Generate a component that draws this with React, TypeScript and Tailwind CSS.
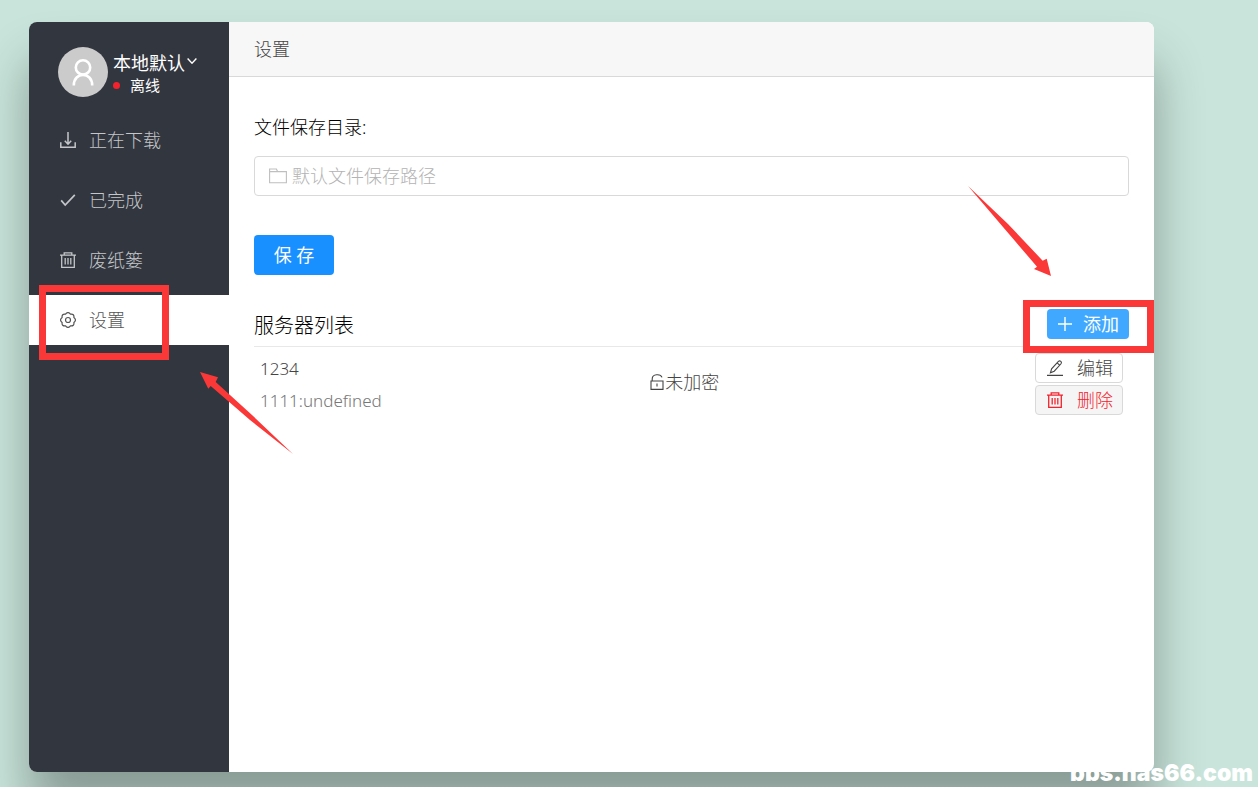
import React from 'react';
import clsx from 'clsx';

type IconProps = { className?: string };

const DownloadIcon: React.FC<IconProps> = ({ className }) => (
  <svg viewBox="0 0 16 16" className={className} fill="none" stroke="currentColor" strokeWidth="1.5">
    <path d="M.8 10.2v5h14.4v-5M8 0v12M4.8 8.8L8 12.2l3.2-3.4" />
  </svg>
);

const CheckIcon: React.FC<IconProps> = ({ className }) => (
  <svg viewBox="0 0 16 16" className={className} fill="none" stroke="currentColor" strokeWidth="1.7">
    <path d="M1.2 8.4l4 4.6L14.8 2.8" />
  </svg>
);

const TrashIcon: React.FC<IconProps> = ({ className }) => (
  <svg viewBox="0 0 16 16" className={className} fill="none" stroke="currentColor" strokeWidth="1.3">
    <path d="M0 3.2h16M4.2 3V.9h7.6V3M1.7 3.2v12.1h12.6V3.2M5.2 6v6.6M8 6v6.6M10.8 6v6.6" />
  </svg>
);

const GearIcon: React.FC<IconProps> = ({ className }) => (
  <svg viewBox="0 0 16 16" className={className} fill="none" stroke="currentColor" strokeWidth="1.2">
    <path d="M13.9 5.55Q17 8 13.9 10.45Q14.4 14.4 10.45 13.9Q8 17 5.55 13.9Q1.6 14.4 2.1 10.45Q-1 8 2.1 5.55Q1.6 1.6 5.55 2.1Q8 -1 10.45 2.1Q14.4 1.6 13.9 5.55Z" />
    <circle cx="8" cy="8" r="2.5" />
  </svg>
);

const FolderIcon: React.FC<IconProps> = ({ className }) => (
  <svg viewBox="0 0 18 16" className={className} fill="none" stroke="currentColor" strokeWidth="1.1">
    <path d="M.6 14.8V1h6.8l1.2 2.6h8.8v11.2zM.6 3.6h8" />
  </svg>
);

const LockIcon: React.FC<IconProps> = ({ className }) => (
  <svg viewBox="0 0 14 16" className={className} fill="none" stroke="currentColor" strokeWidth="1.1">
    <path d="M1 7h12v8.4H1zM2.2 7V5c0-5.2 8.4-5.4 9.8-1.6M7 9.4v3" />
  </svg>
);

const PencilIcon: React.FC<IconProps> = ({ className }) => (
  <svg viewBox="0 0 16 16" className={className} fill="none" stroke="currentColor" strokeWidth="1.1">
    <path d="M0 15.4h16M3.4 12.8l1.2-4L11.4 1.4q1.2-1 2.4 0t0 2.6L7.2 11.2zM10.2 2.8l2.4 2.4" />
  </svg>
);

const PlusIcon: React.FC<IconProps> = ({ className }) => (
  <svg viewBox="0 0 16 16" className={className} fill="none" stroke="currentColor" strokeWidth="1.4">
    <path d="M1 8h14M8 1v14" />
  </svg>
);

const menus = [
  { key: 'downloading', label: '正在下载', Icon: DownloadIcon },
  { key: 'done', label: '已完成', Icon: CheckIcon },
  { key: 'trash', label: '废纸篓', Icon: TrashIcon },
  { key: 'setting', label: '设置', Icon: GearIcon },
];

const servers = [{ name: '1234', address: '1111:undefined', secure: '未加密' }];

const Sidebar: React.FC<{ active: string }> = ({ active }) => (
  <aside className="w-[200px] shrink-0 rounded-l-lg bg-[#32363f] pt-[25px]">
    <div className="flex gap-[5px] pl-[29px]">
      <span className="flex h-[50px] w-[50px] items-center justify-center rounded-full bg-[#cbcbcb] text-white">
        <svg viewBox="0 0 28 28" className="h-7 w-7" fill="none" stroke="currentColor" strokeWidth="2.6">
          <circle cx="14" cy="9.4" r="7.2" />
          <path d="M4.8 27.4c0-14 18.4-14 18.4 0" />
        </svg>
      </span>
      <div className="font-normal text-white">
        <button className="flex h-[28px] items-center gap-[2px] pt-1 text-[18px]">
          本地默认
          <svg viewBox="0 0 10 6" className="mb-1 h-[6px] w-[10px]" fill="none" stroke="currentColor" strokeWidth="1.4">
            <path d="M.6.6L5 5.2 9.4.6" />
          </svg>
        </button>
        <p className="flex h-[20px] items-center gap-[10px] text-[15px]">
          <span className="h-[7px] w-[7px] rounded-full bg-[#f5222d]" />
          离线
        </p>
      </div>
    </div>
    <nav className="mt-[18px] flex flex-col gap-[10px]">
      {menus.map(({ key, label, Icon }) => (
        <a
          key={key}
          href={`#${key}`}
          className={clsx(
            'flex h-[50px] items-center gap-[13px] pl-[31px] text-[18px]',
            key === active ? 'bg-white text-[#555]' : 'text-[#c4c6c9]'
          )}
        >
          <Icon className="h-4 w-4" />
          {label}
        </a>
      ))}
    </nav>
  </aside>
);

const App: React.FC = () => (
  <div className="relative flex h-screen overflow-hidden bg-[#c9e5db] pt-[22px] pr-[104px] pb-[15px] pl-[29px] font-['Noto_Sans','Noto_Sans_CJK_SC',sans-serif] font-light">
    <div className="relative flex flex-1 rounded-lg bg-white shadow-[0_40px_50px_rgba(0,0,0,0.32)]">
      <Sidebar active="setting" />
      <main className="flex-1">
        <header className="flex h-[55px] items-center rounded-tr-lg border-b border-[#d9d9d9] bg-[#f7f7f7] px-[25px]">
          <h1 className="text-[18px] text-[#444]">设置</h1>
        </header>
        <div className="px-[25px] pt-[36px]">
          <form onSubmit={(e) => e.preventDefault()}>
            <label htmlFor="save-path" className="block text-[18px] leading-[28px] text-black">
              文件保存目录:
            </label>
            <div className="mt-[15px] flex h-10 items-center gap-[5px] rounded border border-[#d9d9d9] px-[14px] text-[#bfbfbf]">
              <FolderIcon className="h-4 w-[18px]" />
              <input
                id="save-path"
                type="text"
                placeholder="默认文件保存路径"
                className="flex-1 text-[18px] outline-none placeholder:text-[#b3b3b3]"
              />
            </div>
            <button type="submit" className="mt-[39px] h-10 w-20 rounded bg-[#1890ff] text-[18px] font-normal text-white">
              保 存
            </button>
          </form>

          <div className="mt-[34px] flex h-[38px] items-start justify-between border-b border-[#e8e8e8]">
            <h2 className="text-[20px] leading-[34px] text-black">服务器列表</h2>
            <button className="flex h-[30px] items-center gap-[10px] rounded bg-[#40a9ff] px-[10px] text-[18px] font-normal text-white">
              <PlusIcon className="h-4 w-4" />
              添加
            </button>
          </div>
          <ul>
            {servers.map((s) => (
              <li key={s.name} className="grid grid-cols-[45%_1fr_auto] px-[6px] pt-[6px] text-[18px] text-[#444]">
                <div className="text-[17px] leading-8">
                  <p>{s.name}</p>
                  <p className="text-[#777]">{s.address}</p>
                </div>
                <div className="flex h-[58px] items-center gap-px pl-[2px]">
                  <LockIcon className="h-4 w-[14px]" />
                  {s.secure}
                </div>
                <div className="flex flex-col gap-[2px]">
                  <button className="flex h-[30px] items-center gap-[14px] rounded border border-[#d9d9d9] bg-white pr-[9px] pl-[11px]">
                    <PencilIcon className="h-4 w-4" />
                    编辑
                  </button>
                  <button className="flex h-[30px] items-center gap-[14px] rounded border border-[#d9d9d9] bg-[#f5f5f5] pr-[9px] pl-[11px] text-[#f5222d]">
                    <TrashIcon className="h-4 w-4" />
                    删除
                  </button>
                </div>
              </li>
            ))}
          </ul>
        </div>
      </main>

      {/* markers over the settings entry and the add button */}
      <div className="pointer-events-none absolute top-[263px] left-[10px] h-[75px] w-[130px] border-[7px] border-[#fb3838]" />
      <div className="pointer-events-none absolute top-[278px] right-0 h-[53px] w-[131px] border-[7px] border-[#fb3838]" />
      <svg viewBox="0 0 94 83" className="pointer-events-none absolute top-[350px] left-[171px] h-[83px] w-[94px]" fill="#fb3838">
        <path d="M0 0L18 5.3 15.7 10 52 43 93 82 50 48 10.7 14 8.3 16.7z" />
      </svg>
      <svg viewBox="0 0 83 90" className="pointer-events-none absolute top-[164px] right-[103px] h-[90px] w-[83px]" fill="#fb3838">
        <path d="M0 0L40 38 74.7 74.7 78.7 72.7 83 90 66 83 69 80.7 35 41z" />
      </svg>
    </div>
    <span className="absolute right-[5px] bottom-0 font-['Inter'] text-[23px] leading-[28px] font-black text-white">
      bbs.nas66.com
    </span>
  </div>
);

export default App;
